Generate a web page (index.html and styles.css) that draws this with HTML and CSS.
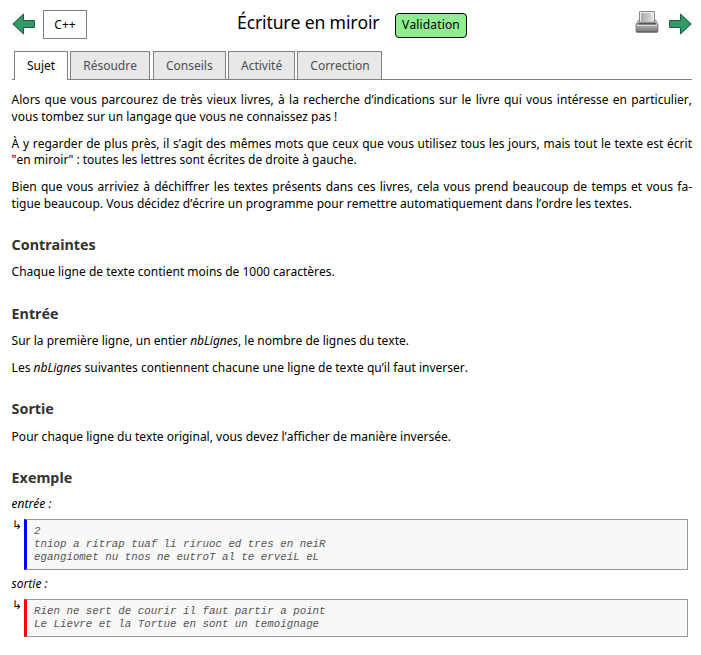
FILE: index.html
```html
<!DOCTYPE html>
<html lang="fr">
<head>
<meta charset="utf-8">
<title>Écriture en miroir</title>
<link rel="stylesheet" href="styles.css">
</head>
<body>
<header class="top">
  <div class="side">
    <svg class="arrow" width="24" height="22" viewBox="0 0 24 22"><path d="M.8 11 11.5 1v6.5h11v7h-11V21z" fill="#339966" stroke="#2b5742"/></svg>
    <span class="lang">C++</span>
  </div>
  <h1 class="title">Écriture en miroir</h1>
  <span class="status">Validation</span>
  <div class="tools">
    <svg class="printer" width="24" height="24" viewBox="0 0 24 24">
      <defs>
        <linearGradient id="body" x2="0" y2="1"><stop offset="0" stop-color="#ddd"/><stop offset=".45" stop-color="#aaa"/><stop offset="1" stop-color="#727272"/></linearGradient>
        <linearGradient id="paper"><stop offset="0" stop-color="#aaa"/><stop offset="1" stop-color="#ddd"/></linearGradient>
      </defs>
      <path d="M3.5 10 1 14.5V21q0 1.5 1.5 1.5h19Q23 22.5 23 21v-6.500L20.500 10z" fill="url(#body)" stroke="#777" stroke-width=".8"/>
      <path d="M4.500 1.500h15V12h-15z" fill="#eee" stroke="#888"/>
      <path d="M6 3h11.500v8.500H6z" fill="url(#paper)"/>
      <path d="M3 12.800h18v1.700H3z" fill="#555"/>
      <path d="M2 15.500h20" stroke="#ddd"/>
      <path d="M1.500 21.500h21" stroke="#666"/>
    </svg>
    <svg class="arrow" width="24" height="22" viewBox="0 0 24 22"><path d="M23.200 11 12.500 1v6.500h-11v7h11V21z" fill="#339966" stroke="#2b5742"/></svg>
  </div>
</header>
<nav class="tabs">
  <a class="tab active">Sujet</a>
  <a class="tab">Résoudre</a>
  <a class="tab">Conseils</a>
  <a class="tab activity">Activité</a>
  <a class="tab correction">Correction</a>
</nav>
<main class="content">
  <p>Alors que vous parcourez de très vieux livres, à la recherche d’indications sur le livre qui vous intéresse en particulier, vous tombez sur un langage que vous ne connaissez pas !</p>
  <p>À y regarder de plus près, il s’agit des mêmes mots que ceux que vous utilisez tous les jours, mais tout le texte est écrit "en miroir" : toutes les lettres sont écrites de droite à gauche.</p>
  <p>Bien que vous arriviez à déchiffrer les textes présents dans ces livres, cela vous prend beaucoup de temps et vous fa&shy;tigue beaucoup. Vous décidez d’écrire un programme pour remettre automatiquement dans l’ordre les textes.</p>
  <h2>Contraintes</h2>
  <p>Chaque ligne de texte contient moins de 1000 caractères.</p>
  <h2>Entrée</h2>
  <p>Sur la première ligne, un entier <em>nbLignes</em>, le nombre de lignes du texte.</p>
  <p>Les <em>nbLignes</em> suivantes contiennent chacune une ligne de texte qu’il faut inverser.</p>
  <h2>Sortie</h2>
  <p>Pour chaque ligne du texte original, vous devez l’afficher de manière inversée.</p>
  <h2>Exemple</h2>
  <div class="label">entrée :</div>
  <div class="sample"><span class="hook">↳</span><pre class="in">2
tniop a ritrap tuaf li riruoc ed tres en neiR
egangiomet nu tnos ne eutroT al te erveiL eL</pre></div>
  <div class="label">sortie :</div>
  <div class="sample"><span class="hook">↳</span><pre class="out">Rien ne sert de courir il faut partir a point
Le Lievre et la Tortue en sont un temoignage</pre></div>
</main>
</body>
</html>
```
FILE: styles.css
```css
* { box-sizing: border-box; }
body {
  margin: 0;
  padding: 10px 9px 0 12px;
  background: #fff;
  color: #000;
  font: 12px/16.600px "Noto Sans", sans-serif;
  font-kerning: none;
}
svg { display: block; }
.top { display: flex; height: 41px; align-items: flex-start; }
.side { display: flex; width: 225px; gap: 7px; }
.side .arrow, .tools .arrow { margin-top: 3px; }
.lang { width: 44px; height: 29px; border: 1px solid #808080; text-align: center; line-height: 27px; }
.title { margin: 0; width: 143px; font-size: 17.600px; font-weight: 400; line-height: 25px; white-space: nowrap; letter-spacing: -.150px; }
.status {
  width: 72px; height: 25px; margin: 3px 0 0 15px;
  border: 1px solid #000; border-radius: 4px;
  background: #90ee90; line-height: 22px; text-align: center; letter-spacing: .15px;
}
.tools { display: flex; gap: 9px; margin-left: auto; }
.tabs { display: flex; gap: 3px; height: 29px; padding-left: 2px; border-bottom: 1px solid #808080; }
.tab {
  height: 28px; padding: 0 12px;
  border: 1px solid #808080; border-bottom: 0;
  background: #e8e8e8; color: #4d4d4d; line-height: 27px;
}
.tab.activity { width: 67px; margin-left: -.700px; }
.tab.correction { width: 85px; margin-left: -.700px; }
.active { height: 29px; margin-right: -1px; background: #fff; color: #000; }
.content { padding-top: 12px; margin-left: -.400px; }
p { margin: 0 0 10.400px; text-align: justify; }
h2 { margin: 23.600px 0 11.500px; color: #333; font-size: 14.300px; line-height: 17px; }
.label { margin-top: -1px; font-style: italic; }
.sample { display: flex; margin: 6px 4px 7.400px .400px; }
.hook { width: 12px; line-height: 12px; }
pre {
  flex: 1; margin: 0; padding: 5px 7px;
  border: 1px solid #999; border-left: 3px solid #00f;
  background: #f8f8f8; color: #555;
  font: italic 10.800px/13px "Liberation Mono", monospace;
}
.out { border-left-color: #f00; }
```
